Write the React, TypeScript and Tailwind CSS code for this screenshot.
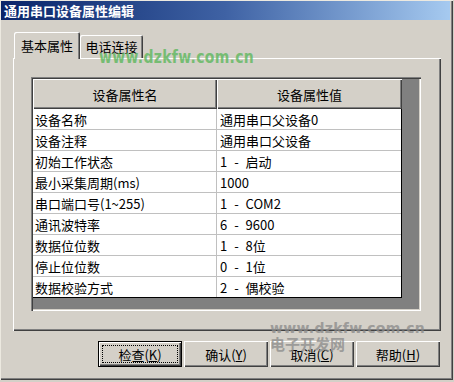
const rows = [
  ["设备名称", "通用串口父设备0"],
  ["设备注释", "通用串口父设备"],
  ["初始工作状态", "1 - 启动"],
  ["最小采集周期(ms)", "1000"],
  ["串口端口号(1~255)", "1 - COM2"],
  ["通讯波特率", "6 - 9600"],
  ["数据位位数", "1 - 8位"],
  ["停止位位数", "0 - 1位"],
  ["数据校验方式", "2 - 偶校验"],
];

const buttons = [
  { label: "检查", key: "K", isDefault: true },
  { label: "确认", key: "Y" },
  { label: "取消", key: "C" },
  { label: "帮助", key: "H" },
];

const raised =
  "shadow-[inset_1px_1px_#ffffff,inset_-1px_-1px_#404040,inset_-2px_-2px_#808080]";

const App = () => {
  return (
    <div className="relative w-[454px] h-[382px] bg-[#d4d0c8] font-['Noto_Sans_CJK_SC','Noto_Sans',sans-serif] text-[13px] text-black">
      <div className="w-[453px] h-[380px] flex flex-col shadow-[inset_1px_1px_#ece9e0,inset_-1px_-1px_#404040,inset_-2px_-2px_#808080]">
        {/* title bar */}
        <div className="mt-[1px] ml-[1px] mr-[3px] h-[19px] flex items-center pl-[3px] bg-linear-to-r from-[#0a246a] via-[#3f62a4] to-[#a6caf0] text-white font-bold text-[13px] leading-none">
          通用串口设备属性编辑
        </div>

        {/* tabs */}
        <div className="mt-[12px] ml-[14px] h-[26px] flex items-end">
          <div
            className={`relative z-10 -mb-px w-[66px] h-[27px] flex items-center justify-center bg-[#d4d0c8] rounded-t-[2px] leading-none shadow-[inset_1px_1px_#ffffff,inset_-1px_0_#404040,inset_-2px_0_#808080]`}
          >
            基本属性
          </div>
          <div className="w-[63px] h-[23px] flex items-center justify-center bg-[#d4d0c8] rounded-t-[2px] leading-none shadow-[inset_1px_1px_#ffffff,inset_-1px_0_#404040,inset_-2px_0_#808080]">
            电话连接
          </div>
        </div>

        {/* tab panel */}
        <div className={`ml-[13px] w-[428px] h-[273px] pt-[19px] pl-[18px] ${raised}`}>
          <div className="w-[390px] h-[234px] p-[2px] bg-[#808080] shadow-[inset_1px_1px_#808080,inset_2px_2px_#404040,inset_-1px_-1px_#ffffff,inset_-2px_-2px_#d4d0c8]">
            <div className="w-[369px]">
              <div className="flex h-[30px] leading-none">
                <div className={`w-[184px] flex items-center justify-center bg-[#d4d0c8] ${raised}`}>
                  设备属性名
                </div>
                <div className={`w-[185px] flex items-center justify-center bg-[#d4d0c8] ${raised}`}>
                  设备属性值
                </div>
              </div>
              <div className="bg-white border-r border-b border-black">
                {rows.map(([name, value]) => (
                  <div
                    key={name}
                    className="flex h-[21px] border-b border-[#c0c0c0] last:h-[20px] last:border-b-0 leading-none"
                  >
                    <div className="w-[184px] flex items-center pl-[2px] border-r border-[#c0c0c0] whitespace-pre">
                      {name}
                    </div>
                    <div className="flex-1 flex items-center pl-[3px] whitespace-pre [word-spacing:4px]">
                      {value}
                    </div>
                  </div>
                ))}
              </div>
            </div>
          </div>
        </div>

        {/* buttons */}
        <div className="mt-[10px] ml-[13px] w-[428px] flex justify-end gap-[2px] pr-[1px]">
          {buttons.map((b) => (
            <div
              key={b.key}
              className={`relative w-[84px] h-[26px] flex items-center justify-center leading-none ${
                b.isDefault
                  ? "border border-black shadow-[inset_1px_1px_#ffffff,inset_-1px_-1px_#404040,inset_-2px_-2px_#808080]"
                  : raised
              }`}
            >
              {b.isDefault && (
                <span className="absolute inset-[3px] border border-dotted border-black" />
              )}
              <span>
                {b.label}(<span className="underline">{b.key}</span>)
              </span>
            </div>
          ))}
        </div>
      </div>

      {/* watermarks */}
      <div className="absolute left-[99px] top-[47px] font-['DejaVu_Sans',sans-serif] font-bold text-[14px] tracking-[0.3px] text-[#5fb85f] opacity-80 scale-y-[1.3] origin-top leading-none">
        www.dzkfw.com.cn
      </div>
      <div className="absolute left-[270px] top-[321px] font-['DejaVu_Sans',sans-serif] font-bold text-[14px] tracking-[0.3px] text-[#8a8a8a] opacity-75 leading-none">
        www.dzkfw.com.cn
      </div>
      <div className="absolute left-[270px] top-[336px] font-bold text-[15px] text-[#8a8a8a] opacity-75 leading-none">
        电子开发网
      </div>
    </div>
  );
};

export default App;
